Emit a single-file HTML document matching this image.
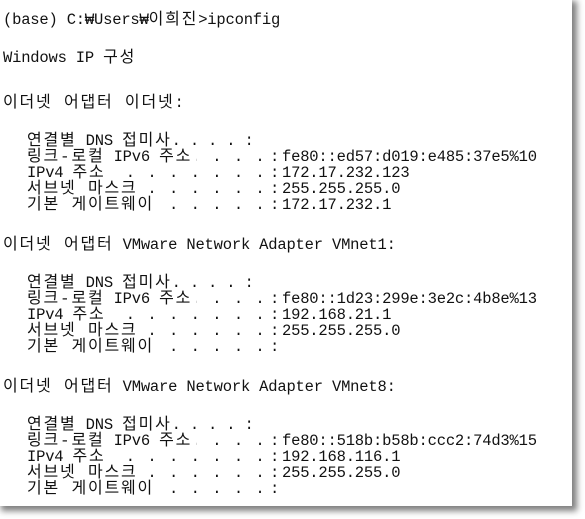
<!DOCTYPE html>
<html><head><meta charset="utf-8"><style>
html,body{margin:0;padding:0;background:#fff;width:585px;height:519px;overflow:hidden}
.panel{position:absolute;left:0;top:0;width:572px;height:506px;background:#fff;box-shadow:3px 3px 6px 2px rgba(0,0,0,0.5)}
.l{position:absolute;white-space:pre;font-family:"Liberation Mono","Noto Sans CJK KR",monospace;font-size:15.5px;line-height:16px;color:#111;letter-spacing:-0.2px}
.k{font-size:16px;letter-spacing:1.8px}
.lab{position:absolute;left:27px;background:#fff;white-space:pre;z-index:2;padding-right:4px}
.dots{position:absolute;right:324px;white-space:pre;overflow:hidden;width:200px;text-align:right;letter-spacing:1.5px}
.c{position:absolute;left:270px}
.v{position:absolute;left:282px}
</style></head><body>
<div class="panel"></div>
<div class="l" style="left:3px;top:12px">(base) C:₩Users₩<span class="k">이희진</span>&gt;ipconfig</div>
<div class="l" style="left:3px;top:50px">Windows IP <span class="k">구성</span></div>
<div class="l" style="left:3px;top:95px"><span class="k">이더넷 어댑터 이더넷</span>:</div>

<div class="l" style="left:27px;top:133px"><span class="k">연결별</span> DNS <span class="k">접미사</span>. . . . :</div>
<div class="l" style="top:149px;left:0;width:585px"><span class="lab"><span class="k">링크-로컬</span> IPv6 <span class="k">주소</span></span><span class="dots">. . . . . . . . . . . . .</span><span class="c">:</span><span class="v">fe80::ed57:d019:e485:37e5%10</span></div>
<div class="l" style="top:165px;left:0;width:585px"><span class="lab">IPv4 <span class="k">주소</span></span><span class="dots">. . . . . . . . . . . . .</span><span class="c">:</span><span class="v">172.17.232.123</span></div>
<div class="l" style="top:181px;left:0;width:585px"><span class="lab"><span class="k">서브넷 마스크</span></span><span class="dots">. . . . . . . . . . . . .</span><span class="c">:</span><span class="v">255.255.255.0</span></div>
<div class="l" style="top:197px;left:0;width:585px"><span class="lab"><span class="k">기본 게이트웨이</span></span><span class="dots">. . . . . . . . . . . . .</span><span class="c">:</span><span class="v">172.17.232.1</span></div>

<div class="l" style="left:3px;top:237px"><span class="k">이더넷 어댑터</span> VMware Network Adapter VMnet1:</div>
<div class="l" style="left:27px;top:275px"><span class="k">연결별</span> DNS <span class="k">접미사</span>. . . . :</div>
<div class="l" style="top:291px;left:0;width:585px"><span class="lab"><span class="k">링크-로컬</span> IPv6 <span class="k">주소</span></span><span class="dots">. . . . . . . . . . . . .</span><span class="c">:</span><span class="v">fe80::1d23:299e:3e2c:4b8e%13</span></div>
<div class="l" style="top:307px;left:0;width:585px"><span class="lab">IPv4 <span class="k">주소</span></span><span class="dots">. . . . . . . . . . . . .</span><span class="c">:</span><span class="v">192.168.21.1</span></div>
<div class="l" style="top:323px;left:0;width:585px"><span class="lab"><span class="k">서브넷 마스크</span></span><span class="dots">. . . . . . . . . . . . .</span><span class="c">:</span><span class="v">255.255.255.0</span></div>
<div class="l" style="top:339px;left:0;width:585px"><span class="lab"><span class="k">기본 게이트웨이</span></span><span class="dots">. . . . . . . . . . . . .</span><span class="c">:</span></div>

<div class="l" style="left:3px;top:379px"><span class="k">이더넷 어댑터</span> VMware Network Adapter VMnet8:</div>
<div class="l" style="left:27px;top:417px"><span class="k">연결별</span> DNS <span class="k">접미사</span>. . . . :</div>
<div class="l" style="top:433px;left:0;width:585px"><span class="lab"><span class="k">링크-로컬</span> IPv6 <span class="k">주소</span></span><span class="dots">. . . . . . . . . . . . .</span><span class="c">:</span><span class="v">fe80::518b:b58b:ccc2:74d3%15</span></div>
<div class="l" style="top:449px;left:0;width:585px"><span class="lab">IPv4 <span class="k">주소</span></span><span class="dots">. . . . . . . . . . . . .</span><span class="c">:</span><span class="v">192.168.116.1</span></div>
<div class="l" style="top:465px;left:0;width:585px"><span class="lab"><span class="k">서브넷 마스크</span></span><span class="dots">. . . . . . . . . . . . .</span><span class="c">:</span><span class="v">255.255.255.0</span></div>
<div class="l" style="top:481px;left:0;width:585px"><span class="lab"><span class="k">기본 게이트웨이</span></span><span class="dots">. . . . . . . . . . . . .</span><span class="c">:</span></div>
</body></html>
